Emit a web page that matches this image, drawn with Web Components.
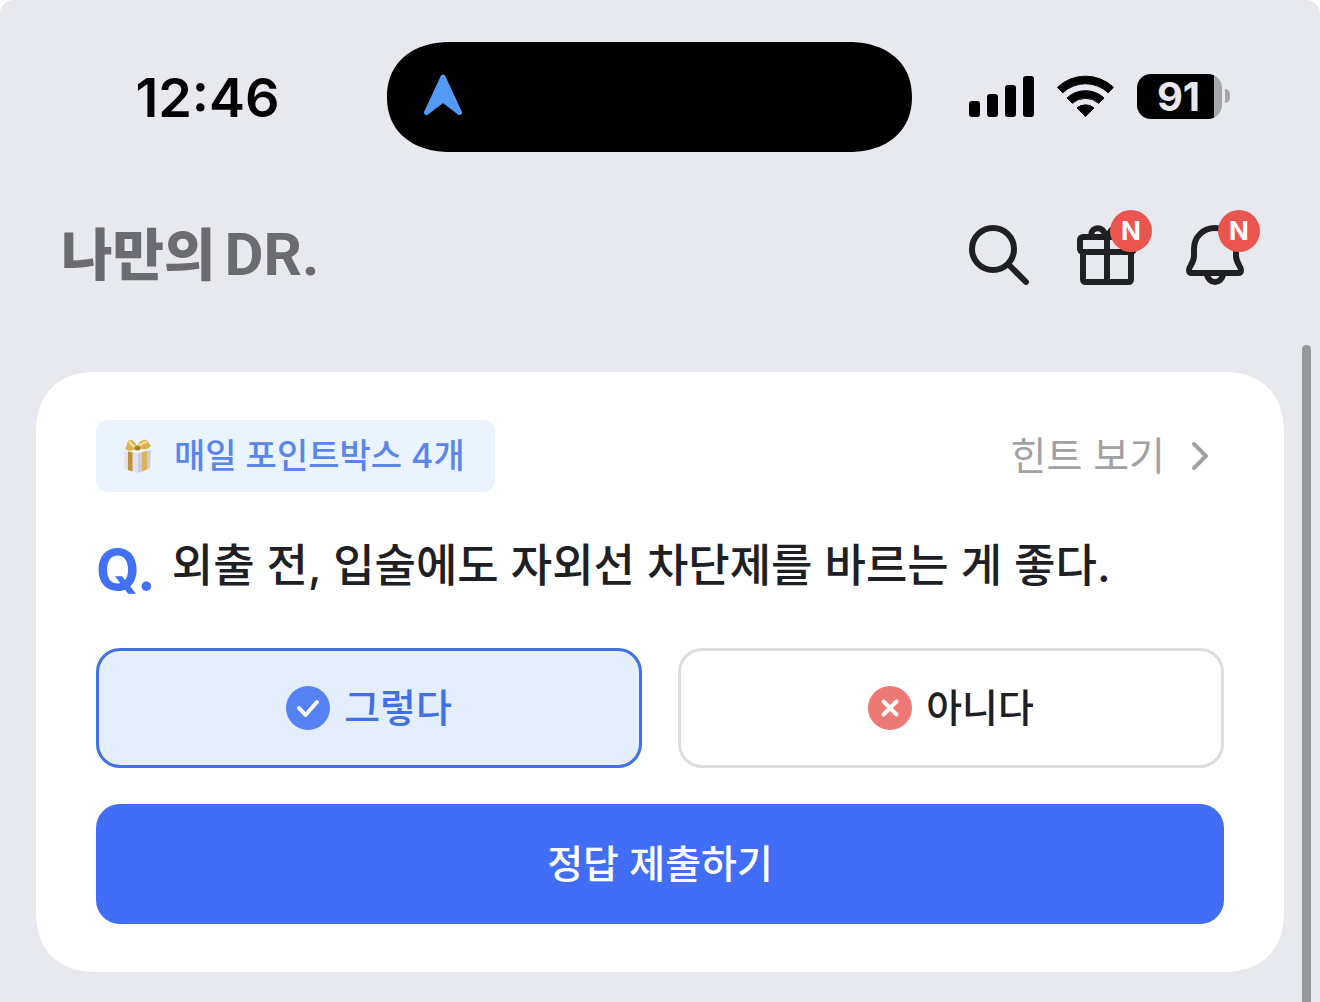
<!DOCTYPE html>
<html lang="ko">
<head>
<meta charset="utf-8">
<meta name="viewport" content="width=device-width, initial-scale=1">
<title>나만의 DR.</title>
<style>
html{background:#fff}
body{margin:0;font-family:Inter,"Noto Sans CJK KR",sans-serif;color:#1f2024}
</style>
</head>
<body>
<quiz-app></quiz-app>
<script>
const define=(name,html)=>customElements.define(name,class extends HTMLElement{
  constructor(){
    super();
    const t=document.createElement('template');
    t.innerHTML='<style>*{box-sizing:border-box}svg{display:block;flex:none}button{font:inherit;color:inherit;border:0;margin:0;padding:0;background:none;cursor:pointer}</style>'+html;
    this.attachShadow({mode:'open'}).append(t.content.cloneNode(true));
  }
});

define('status-bar',`
<style>
:host{display:grid;grid-template-columns:1fr 525px 1fr;align-items:center;padding:42px 21px 13px 0}
time{text-align:center;padding:2px 0 0 28px;font:600 54px/64px Inter,sans-serif;color:#000}
.island{height:110px;border-radius:64px/55px;corner-shape:superellipse(1.15);background:#000;display:flex;align-items:center;padding:0 37px}
.island svg{margin-bottom:4px}
.right{display:flex;align-items:center;gap:23px;padding:0 0 2px 57px}
.battery{display:flex;align-items:center;gap:3px}
.level{width:85px;height:45px;padding-right:2px;border-radius:14px;background:linear-gradient(90deg,#000 77px,#a5a6aa 77px);color:#e8e9ee;font:700 40px/46px Inter,sans-serif;text-align:center}
.nub{width:5px;height:14px;border-radius:0 5px 5px 0;background:#a5a6aa}
</style>
<time>12:46</time>
<div class="island"><svg width="38" height="42" viewBox="0 0 38 42"><path d="M19 3L35.5 38.5L19 26L2.5 38.5Z" fill="#5499f7" stroke="#5499f7" stroke-width="5" stroke-linejoin="round"/></svg></div>
<div class="right">
<svg width="65" height="42" viewBox="0 0 65 42"><rect y="26" width="11" height="16" rx="3"/><rect x="18" y="19" width="11" height="23" rx="3"/><rect x="36" y="10" width="11" height="32" rx="3"/><rect x="54" y="1" width="11" height="41" rx="3"/></svg>
<svg width="57" height="42" viewBox="0 0 57 42" stroke="#000" stroke-linejoin="round"><path d="M.5 12.200A41 41 0 0 1 56.5 12.200L51.200 17.800A33 33 0 0 0 5.800 17.800Z"/><path d="M10 23A27 27 0 0 1 47 23L41.700 28.300A20 20 0 0 0 15.300 28.300Z"/><path d="M20 33A13 13 0 0 1 37 33L28.500 41.500Z"/></svg>
<div class="battery"><div class="level">91</div><div class="nub"></div></div>
</div>`);

define('badge-icon',`
<style>
:host{display:block;position:relative}
button{display:block}
.badge{position:absolute;top:-9px;right:-9px;width:42px;height:42px;border-radius:50%;background:#ea564f;color:#fff;font:700 26px/42px Inter,sans-serif;text-align:center;pointer-events:none}
:host(:not([badge])) .badge{display:none}
</style>
<button><slot></slot></button><span class="badge">N</span>`);

define('app-header',`
<style>
:host{display:flex;align-items:center;justify-content:space-between;height:180px;padding:0 69px 0 61px}
.logo{display:flex;align-items:baseline;gap:9px;padding-bottom:5px;color:#6b6c71;font:900 56px/72px "Noto Sans CJK KR",sans-serif;text-decoration:none}
.logo b{font:700 60px/72px Roboto,sans-serif}
nav{display:flex;gap:36px}
svg{fill:none;stroke:#1f2024;stroke-width:6;stroke-linecap:round;stroke-linejoin:round}
</style>
<a class="logo" href="#"><span>나만의</span><b>DR.</b></a>
<nav>
<badge-icon><svg role="img" aria-label="검색" width="72" height="72" viewBox="0 0 72 72"><circle cx="30" cy="30" r="21"/><path d="M46 46L63 63"/></svg></badge-icon>
<badge-icon badge><svg role="img" aria-label="선물" width="72" height="72" viewBox="0 0 72 72"><rect x="9" y="18" width="54" height="15" rx="3"/><path d="M12 33V60Q12 63 15 63H57Q60 63 60 60V33M36 18V63M21 17C18 10 29 6 33 13L36 17L39 13C43 6 54 10 51 17"/></svg></badge-icon>
<badge-icon badge><svg role="img" aria-label="알림" width="72" height="72" viewBox="0 0 72 72"><path d="M36 9C24 9 15 18 15 30V37C15 44 10 47 10 51C10 53 11 54 13 54H59C61 54 62 53 62 51C62 47 57 44 57 37V30C57 18 48 9 36 9ZM28 56C29 60 32 63 36 63S43 60 44 56"/></svg></badge-icon>
</nav>`);

define('point-chip',`
<style>
:host{display:flex;align-items:center;gap:22px;height:72px;padding:0 30px 0 27px;border-radius:12px;background:#eaf3fe;color:#5a85ea;font-size:34px;font-weight:500;line-height:48px}
</style>
<svg width="29" height="34" viewBox="0 0 29 34"><path d="M1 12L15 14V34L2 30Z" fill="#e4e1ef"/><path d="M15 14L28 11L27 29L15 34Z" fill="#cfcbde"/><path d="M1 12L14 9L28 11L15 14Z" fill="#f3f1f8"/><path d="M5 12.500L9.500 13.200V32.500L5 31Z" fill="#b9943c"/><path d="M19 13.200L24 12V30.500L19 32.500Z" fill="#d9b65c"/><path d="M14 9C9 13 3 12 2 9C5 8 3 3 6 1C10 0 14 4 14 9ZM15 9C14 4 19 0 23 1C27 3 25 5 28 6C27 10 21 12 15 9Z" fill="#dbb451"/><path d="M13 8C9 7 7 4 6 2M15 8C18 5 21 3 24 3" stroke="#f8e19b" stroke-width="2" fill="none"/><ellipse cx="14.500" cy="9" rx="3" ry="2.500" fill="#a87f28"/></svg>
<slot></slot>`);

define('hint-link',`
<style>
a{display:flex;align-items:center;gap:26px;padding-right:15px;color:#a1a1a5;font-size:39px;line-height:56px;text-decoration:none}
</style>
<a href="#"><slot></slot><svg width="18" height="30" viewBox="0 0 18 30" fill="none" stroke="#a1a1a5" stroke-width="4" stroke-linecap="round" stroke-linejoin="round"><path d="M3 3L15 15L3 27"/></svg></a>`);

define('answer-option',`
<style>
:host{display:block;flex:1}
button{display:flex;align-items:center;justify-content:center;gap:14px;width:100%;height:120px;border:3px solid #dcdddf;border-radius:24px;background:#fff;font-size:39px;font-weight:500;line-height:56px}
:host([selected]) button{border-color:#4270e6;background:#e4eefd;color:#4270e6}
</style>
<button><slot name="icon"></slot><slot></slot></button>`);

define('quiz-card',`
<style>
:host{display:flex;flex-direction:column;flex:1;padding:48px 60px;border-radius:54px;background:#fff}
@supports (corner-shape:superellipse(1.25)){:host{border-radius:62px;corner-shape:superellipse(1.25)}}
.top,.answers{display:flex;align-items:center;justify-content:space-between}
.question{display:flex;align-items:flex-start;gap:16px;margin:48px 0;font-size:45px;font-weight:500;line-height:52px}
.question b{color:#4270f6;font:700 56px/60px Inter,sans-serif}
.question p{margin:0}
.answers{gap:36px}
.submit{height:120px;margin-top:36px;border-radius:24px;background:#416df7;color:#fff;font-size:39px;font-weight:500;line-height:56px}
</style>
<div class="top"><point-chip>매일 포인트박스 4개</point-chip><hint-link>힌트 보기</hint-link></div>
<div class="question"><b>Q.</b><p>외출 전, 입술에도 자외선 차단제를 바르는 게 좋다.</p></div>
<div class="answers">
<answer-option selected><svg slot="icon" width="44" height="44" viewBox="0 0 44 44" fill="none" stroke="#fff" stroke-width="4" stroke-linecap="round" stroke-linejoin="round"><circle cx="22" cy="22" r="22" fill="#5681f3" stroke="none"/><path d="M13 22L19.500 29L31 16"/></svg>그렇다</answer-option>
<answer-option><svg slot="icon" width="44" height="44" viewBox="0 0 44 44" fill="none" stroke="#fff" stroke-width="4" stroke-linecap="round"><circle cx="22" cy="22" r="22" fill="#ed7975" stroke="none"/><path d="M15.500 15.500L28.500 28.500M28.500 15.500L15.500 28.500"/></svg>아니다</answer-option>
</div>
<button class="submit">정답 제출하기</button>`);

define('quiz-app',`
<style>
:host{display:flex;flex-direction:column;min-height:100vh;border-radius:14px 14px 0 0;background:#e8e9ee;overflow:hidden}
main{flex:1;display:flex;gap:18px;padding:0 9px 0 36px}
quiz-card{margin:27px 0 30px}
.thumb{width:9px;border-radius:5px 5px 0 0;background:#97989c}
</style>
<status-bar></status-bar>
<app-header></app-header>
<main><quiz-card></quiz-card><div class="thumb"></div></main>`);
</script>
</body>
</html>
